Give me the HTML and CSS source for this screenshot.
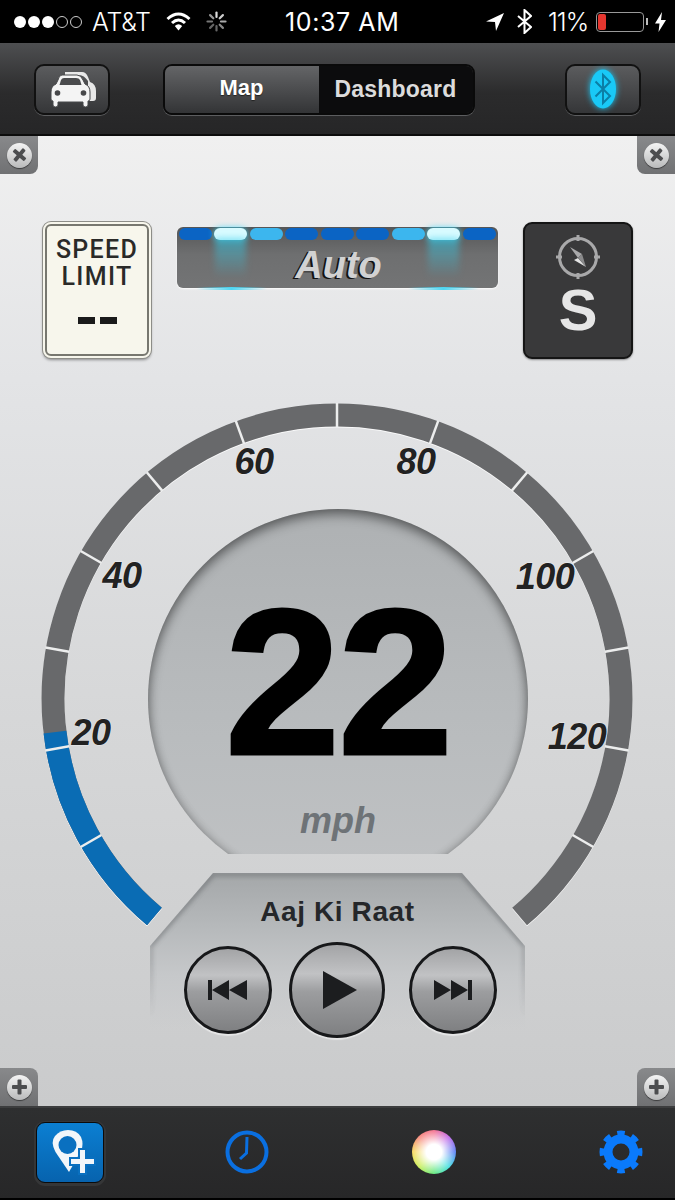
FILE: index.html

```html
<!DOCTYPE html>
<html lang="en">
<head>
    <meta charset="UTF-8">
    <meta name="viewport" content="width=device-width, initial-scale=1.0">
    <title>Dashboard</title>
    <link rel="stylesheet" href="styles.css">
</head>

<body>
    <!-- Status bar -->
    <div class="status">
        <div class="signal">
            <span class="dot"></span><span class="dot"></span><span class="dot"></span>
            <span class="dot dot-off"></span><span class="dot dot-off"></span>
        </div>
        <span class="carrier">AT&amp;T</span>
        <svg class="wifi" width="25" height="20" viewBox="0 0 25 20">
            <path d="M1.5 7 Q12.5 -3 23.5 7" fill="none" stroke="#fff" stroke-width="3"/>
            <path d="M6 11 Q12.5 5 19 11" fill="none" stroke="#fff" stroke-width="3"/>
            <path d="M8.8 14 Q12.5 10.5 16.2 14 L12.5 18.5 Z" fill="#fff"/>
        </svg>
        <svg class="spinner" width="21" height="21" viewBox="0 0 21 21" stroke-width="2.2" stroke-linecap="round">
            <path d="M10.5 1.5V6" stroke="#ddd"/>
            <path d="M16.9 4.1L13.7 7.3" stroke="#ccc"/>
            <path d="M19.5 10.5H15" stroke="#aaa"/>
            <path d="M16.9 16.9L13.7 13.7" stroke="#888"/>
            <path d="M10.5 19.5V15" stroke="#666"/>
            <path d="M4.1 16.9L7.3 13.7" stroke="#666"/>
            <path d="M1.5 10.5H6" stroke="#777"/>
            <path d="M4.1 4.1L7.3 7.3" stroke="#999"/>
        </svg>
        <span class="time">10:37 AM</span>
        <svg class="arrow" width="18" height="18" viewBox="0 0 18 18"><path d="M18 0L0 8.5L9 9L10 18Z" fill="#fff"/></svg>
        <svg class="bt" width="15" height="25" viewBox="0 0 15 25"><path d="M1 7L14 18L7.5 24V1L14 7L1 18" fill="none" stroke="#fff" stroke-width="2"/></svg>
        <span class="percent">11%</span>
        <div class="battery"><span class="battery-level"></span></div>
        <span class="battery-tip"></span>
        <svg class="bolt" width="11" height="20" viewBox="0 0 11 20"><path d="M7 0L0 11.5H4.5L3.5 20L11 8H6Z" fill="#fff"/></svg>
    </div>

    <!-- Top toolbar -->
    <header class="toolbar">
        <button class="tool-btn">
            <svg width="52" height="40" viewBox="0 0 52 40">
                <path d="M19 6V3H36Q40 3 42 8L44 13Q50 15 50 22V29Q50 32 47 32H42V12Q38 6 33 6Z" fill="#e8e8e8"/>
                <path d="M16 6H31Q35 6 37 11L39 15Q44 17 44 23V30Q44 32 42 32V36Q42 38 39.5 38T37 36V33H12V36Q12 38 9.5 38T7 36V32Q5 32 5 30V23Q5 17 10 15L12 11Q13 6 16 6Z" fill="#f4f4f4" stroke="#47484a" stroke-width="1"/>
                <path d="M13.5 16L15 11Q16 9 18 9H30Q33 9 34 11L35.5 16Z" fill="#4a4b4d"/>
                <circle cx="11.5" cy="24" r="2.8" fill="#47484a"/>
                <circle cx="37.5" cy="24" r="2.8" fill="#47484a"/>
            </svg>
        </button>
        <div class="segmented">
            <span class="seg seg-on">Map</span>
            <span class="seg seg-off">Dashboard</span>
        </div>
        <button class="tool-btn">
            <svg class="bt-glow" width="40" height="48" viewBox="0 0 40 48">
                <ellipse cx="20" cy="24" rx="13" ry="19.5" fill="#19c9f7"/>
                <path d="M12.5 16.5L27 31L20 38V10L27 17L12.5 31.5" fill="none" stroke="#0b7ea6" stroke-width="2"/>
            </svg>
        </button>
    </header>

    <!-- Main panel -->
    <main class="panel">
        <div class="notch notch-tl"><span class="screw screw-x"></span></div>
        <div class="notch notch-tr"><span class="screw screw-x"></span></div>
        <div class="notch notch-bl"><span class="screw screw-plus"></span></div>
        <div class="notch notch-br"><span class="screw screw-plus"></span></div>

        <div class="top-row">
            <div class="sign">
                <span class="sign-text">SPEED</span>
                <span class="sign-text">LIMIT</span>
                <div class="sign-dashes"><span></span><span></span></div>
            </div>

            <div class="lightbar">
                <div class="leds">
                    <span class="led"></span>
                    <span class="led led-white"></span>
                    <span class="led led-light"></span>
                    <span class="led"></span>
                    <span class="led"></span>
                    <span class="led"></span>
                    <span class="led led-light"></span>
                    <span class="led led-white"></span>
                    <span class="led"></span>
                </div>
                <span class="auto">Auto</span>
            </div>

            <div class="compass">
                <svg width="46" height="46" viewBox="0 0 46 46">
                    <circle cx="23" cy="23" r="18.5" fill="none" stroke="#a9a9aa" stroke-width="3"/>
                    <path d="M23 1V7M23 39V45M1 23H7M39 23H45" stroke="#a9a9aa" stroke-width="3"/>
                    <path d="M15 13L27 20L23 24Z" fill="#a9a9aa"/>
                    <path d="M31 33L19 26L23 24Z" fill="#e4e4e4"/>
                    <path d="M27 20L31 33L23 24Z" fill="#8a8a8b"/>
                </svg>
                <span class="compass-dir">S</span>
            </div>
        </div>

        <div class="gauge">
            <svg class="gauge-svg" width="675" height="540" viewBox="0 400 675 540">
                <g class="gauge-arcs">
                    <circle class="arc arc-grey" cx="337" cy="700" r="284" pathLength="360" transform="rotate(130 337 700)"/>
                    <circle class="arc arc-blue" cx="337" cy="700" r="284" pathLength="360" transform="rotate(130 337 700)"/>
                </g>
                <line class="tick" x1="337" y1="404" x2="337" y2="428" transform="rotate(-120 337 700)"/>
                <line class="tick" x1="337" y1="404" x2="337" y2="428" transform="rotate(-100 337 700)"/>
                <line class="tick" x1="337" y1="404" x2="337" y2="428" transform="rotate(-80 337 700)"/>
                <line class="tick" x1="337" y1="404" x2="337" y2="428" transform="rotate(-60 337 700)"/>
                <line class="tick" x1="337" y1="404" x2="337" y2="428" transform="rotate(-40 337 700)"/>
                <line class="tick" x1="337" y1="404" x2="337" y2="428" transform="rotate(-20 337 700)"/>
                <line class="tick" x1="337" y1="404" x2="337" y2="428"/>
                <line class="tick" x1="337" y1="404" x2="337" y2="428" transform="rotate(20 337 700)"/>
                <line class="tick" x1="337" y1="404" x2="337" y2="428" transform="rotate(40 337 700)"/>
                <line class="tick" x1="337" y1="404" x2="337" y2="428" transform="rotate(60 337 700)"/>
                <line class="tick" x1="337" y1="404" x2="337" y2="428" transform="rotate(80 337 700)"/>
                <line class="tick" x1="337" y1="404" x2="337" y2="428" transform="rotate(100 337 700)"/>
                <line class="tick" x1="337" y1="404" x2="337" y2="428" transform="rotate(120 337 700)"/>
                <text class="gauge-label" x="91" y="746">20</text>
                <text class="gauge-label" x="122" y="589">40</text>
                <text class="gauge-label" x="254" y="475">60</text>
                <text class="gauge-label" x="416" y="475">80</text>
                <text class="gauge-label" x="545" y="590">100</text>
                <text class="gauge-label" x="577" y="750">120</text>
            </svg>

            <div class="dial-clip">
                <div class="dial">
                    <span class="speed">22</span>
                    <span class="unit">mph</span>
                </div>
            </div>

            <div class="music">
                <svg class="music-edge" width="375" height="170" viewBox="0 0 375 170">
                    <path d="M0 170V73L63 1H312L375 73V170" fill="none" stroke="#55585b" stroke-width="3"/>
                </svg>
                <span class="track">Aaj Ki Raat</span>
                <div class="controls">
                    <button class="ctl">
                        <svg width="40" height="22" viewBox="0 0 40 22"><path d="M0 1H4V21H0ZM4 11L21 1V21ZM21 11L39 1V21Z" fill="#1c1d1f"/></svg>
                    </button>
                    <button class="ctl ctl-play">
                        <svg width="34" height="38" viewBox="0 0 34 38"><path d="M0 0L34 19L0 38Z" fill="#1c1d1f"/></svg>
                    </button>
                    <button class="ctl ctl-next">
                        <svg width="40" height="22" viewBox="0 0 40 22"><path d="M1 1L18 11V1L35 11V1H39V21H35V11L18 21V11L1 21Z" fill="#1c1d1f"/></svg>
                    </button>
                </div>
            </div>
        </div>
    </main>

    <!-- Bottom tab bar -->
    <nav class="tabbar">
        <div class="tab-add">
            <svg width="68" height="61" viewBox="0 0 68 61">
                <path d="M33 50L19.5 30Q14 20 19 14Q24 8 32 8Q41 8 45 15Q48 22 45 29Z" fill="#f2f6fa"/>
                <circle cx="31.5" cy="23" r="9" fill="#0a70c0"/>
                <path d="M43 27H50V36H59V43H50V52H43V43H34V36H43Z" fill="#f2f6fa" stroke="#0a70c0" stroke-width="2"/>
            </svg>
        </div>
        <svg class="tab-clock" width="44" height="44" viewBox="0 0 44 44">
            <circle cx="22" cy="22" r="19.5" fill="none" stroke="#0a6fe0" stroke-width="4"/>
            <path d="M22 7L21.5 23L15 29" fill="none" stroke="#0a6fe0" stroke-width="3"/>
        </svg>
        <div class="tab-color"></div>
        <svg class="tab-gear" width="44" height="44" viewBox="0 0 44 44">
            <circle cx="22" cy="22" r="13" fill="none" stroke="#0a7afc" stroke-width="9"/>
            <circle cx="22" cy="22" r="18.5" fill="none" stroke="#0a7afc" stroke-width="6" pathLength="8" stroke-dasharray="0.5 0.5" transform="rotate(-101.25 22 22)"/>
        </svg>
    </nav>
</body>
</html>
```

FILE: styles.css

```css
* {
    box-sizing: border-box;
}

body {
    margin: 0;
    width: 675px;
    height: 1200px;
    overflow: hidden;
    display: flex;
    flex-direction: column;
    font-family: 'Liberation Sans', Arial, sans-serif;
    background-color: #000;
}

button {
    padding: 0;
    cursor: pointer;
}

/* Status bar */
.status {
    height: 43px;
    flex: none;
    display: flex;
    align-items: center;
    padding-left: 14px;
    background-color: #000;
    color: #fff;
    font-family: 'Inter', 'Liberation Sans', sans-serif;
    font-weight: 300;
}

.signal {
    display: flex;
    gap: 2px;
    width: 78px;
}

.dot {
    width: 12px;
    height: 12px;
    border-radius: 50%;
    background-color: #fff;
}

.dot-off {
    background-color: transparent;
    border: 1px solid #ccc;
}

.carrier {
    font-size: 25px;
    width: 74px;
    letter-spacing: -0.3px;
}

.wifi {
    margin-right: 15px;
}

.spinner {
    margin-right: 58px;
}

.time {
    font-size: 25px;
    font-weight: 400;
    width: 201px;
    letter-spacing: 0.6px;
}

.bt {
    margin-left: 13px;
}

.percent {
    font-size: 25px;
    margin-left: 16px;
    width: 48px;
    letter-spacing: -1px;
}

.battery {
    width: 48px;
    height: 20px;
    border: 1px solid #999;
    border-radius: 4px;
    padding: 1px;
}

.battery-level {
    display: block;
    width: 8px;
    height: 100%;
    border-radius: 2px;
    background-color: #e5362f;
}

.battery-tip {
    width: 2px;
    height: 7px;
    margin-left: 2px;
    background-color: #bbb;
}

.bolt {
    margin-left: 7px;
}

/* Toolbar */
.toolbar {
    height: 93px;
    flex: none;
    display: flex;
    align-items: center;
    justify-content: space-between;
    padding: 1px 34px 0 34px;
    background: linear-gradient(#4e4f51, #2b2b2c 55%, #262627);
    border-bottom: 2px solid #0c0c0c;
}

.tool-btn {
    width: 76px;
    height: 51px;
    display: flex;
    align-items: center;
    justify-content: center;
    border: 2px solid #111;
    border-radius: 10px;
    background: linear-gradient(#5b5c5e, #353638);
    box-shadow: 0 1px 0 #5c5d5f;
}

.bt-glow {
    filter: drop-shadow(0 0 3px #19c9f7);
}

.segmented {
    width: 312px;
    height: 51px;
    margin-right: 38px;
    display: flex;
    border: 2px solid #0a0a0a;
    border-radius: 9px;
    overflow: hidden;
    box-shadow: 0 1px 0 #5c5d5f;
    font-weight: bold;
}

.seg {
    display: flex;
    align-items: center;
    justify-content: center;
}

.seg-on {
    width: 154px;
    padding-bottom: 3px;
    background: linear-gradient(#646567, #333436);
    color: #fff;
    font-size: 22px;
    text-shadow: 0 1px 1px #222;
}

.seg-off {
    flex: 1;
    background-color: #0c0c0d;
    color: #dcdcdc;
    font-size: 23px;
    letter-spacing: 0.2px;
}

/* Main panel */
.panel {
    position: relative;
    height: 970px;
    flex: none;
    padding-top: 86px;
    background: linear-gradient(#f0f0f0, #e3e4e6 25%, #d6d7d8 60%, #cacbcc);
}

.notch {
    position: absolute;
    width: 38px;
    height: 38px;
    display: flex;
    align-items: center;
    justify-content: center;
    background: linear-gradient(#88898b, #707173);
}

.notch-tl {
    left: 0;
    top: 0;
    border-bottom-right-radius: 8px;
}

.notch-tr {
    right: 0;
    top: 0;
    border-bottom-left-radius: 8px;
}

.notch-bl {
    left: 0;
    bottom: 0;
    border-top-right-radius: 8px;
}

.notch-br {
    right: 0;
    bottom: 0;
    border-top-left-radius: 8px;
}

.screw {
    position: relative;
    width: 25px;
    height: 25px;
    border-radius: 50%;
    background: linear-gradient(#f4f4f4, #b9babb);
    box-shadow: 0 1px 1px rgba(0, 0, 0, 0.5);
}

.screw::before,
.screw::after {
    content: "";
    position: absolute;
    left: 5px;
    top: 10.5px;
    width: 15px;
    height: 4px;
    border-radius: 1px;
    background-color: #4c4d4f;
}

.screw-x::before {
    transform: rotate(40deg);
}

.screw-x::after {
    transform: rotate(-50deg);
}

.screw-plus::after {
    transform: rotate(90deg);
}

.top-row {
    display: flex;
    justify-content: space-between;
    align-items: flex-start;
    padding: 0 42px 0 43px;
}

.sign {
    width: 108px;
    height: 136px;
    display: flex;
    flex-direction: column;
    align-items: center;
    padding-top: 12px;
    background-color: #f7f6ec;
    border: 2px solid #f7f6ec;
    border-radius: 8px;
    outline: 2px solid #77776f;
    outline-offset: -4px;
    box-shadow: 0 0 0 1px #8d8d88, 0 2px 3px rgba(0, 0, 0, 0.4);
    color: #2a2a28;
}

.sign-text {
    font-family: 'Roboto', 'Liberation Sans', sans-serif;
    font-size: 25px;
    font-weight: 500;
    line-height: 27px;
    letter-spacing: 1.3px;
}

.sign-dashes {
    display: flex;
    gap: 5px;
    margin-top: 27px;
}

.sign-dashes span {
    width: 17px;
    height: 7px;
    background-color: #1a1a1a;
}

.lightbar {
    position: relative;
    width: 321px;
    height: 61px;
    margin-top: 5px;
    border-radius: 6px;
    background: linear-gradient(#555657, #6e6f70 45%, #737475);
    box-shadow: 0 1px 2px rgba(255, 255, 255, 0.9);
    display: flex;
    flex-direction: column;
    align-items: center;
}

/* cyan line under the bar, below the lit leds */
.lightbar::after {
    content: "";
    position: absolute;
    left: 0;
    right: 0;
    bottom: -2px;
    height: 3px;
    background: linear-gradient(90deg, transparent 6%, #4fd6f2 17%, transparent 28%, transparent 72%, #4fd6f2 83%, transparent 94%);
}

.leds {
    display: flex;
    gap: 2.5px;
    padding-top: 1px;
}

.led {
    position: relative;
    width: 33px;
    height: 12px;
    border-radius: 7px;
    background-color: #0b64c4;
}

.led-light {
    background-color: #3cb6ee;
}

.led-white {
    background-color: #d9fbff;
    box-shadow: 0 0 6px #3fd8f7;
}

/* glow coming down from the lit leds */
.led-white::after {
    content: "";
    position: absolute;
    left: 1px;
    top: 10px;
    width: 31px;
    height: 40px;
    background: linear-gradient(rgba(50, 205, 235, 0.55), rgba(50, 205, 235, 0));
    filter: blur(3px);
}

.auto {
    position: relative;
    font-size: 38px;
    line-height: 40px;
    margin: 5px 0 0 3px;
    font-weight: bold;
    font-style: italic;
    color: #d2d2d2;
    text-shadow: -2px 1px 0 #111;
}

.compass {
    width: 110px;
    height: 137px;
    display: flex;
    flex-direction: column;
    align-items: center;
    padding-top: 10px;
    background-color: #39393a;
    border: 2px solid #151515;
    border-radius: 9px;
    box-shadow: 0 1px 2px rgba(0, 0, 0, 0.4);
}

.compass-dir {
    font-size: 58px;
    line-height: 56px;
    margin-top: 2px;
    font-weight: bold;
    color: #e6e6e6;
}

/* Gauge */
.gauge {
    position: relative;
    height: 540px;
    margin-top: 40px;
}

.gauge-svg {
    display: block;
}

.gauge-arcs {
    filter: drop-shadow(0 1px 0 rgba(255, 255, 255, 0.8));
}

.arc {
    fill: none;
    stroke-width: 23;
}

.arc-grey {
    stroke: #68696b;
    stroke-dasharray: 280 80;
}

.arc-blue {
    stroke: #0a6cb4;
    stroke-dasharray: 43.3 316.7;
}

.tick {
    stroke: #eceded;
    stroke-width: 2.5;
}

.gauge-label {
    font-size: 36px;
    font-weight: bold;
    font-style: italic;
    text-anchor: middle;
    fill: #222;
    letter-spacing: -0.5px;
    paint-order: stroke;
    stroke: rgba(255, 255, 255, 0.5);
    stroke-width: 1px;
}

.dial-clip {
    position: absolute;
    left: 148px;
    top: 110px;
    width: 380px;
    height: 345px;
    overflow: hidden;
}

.dial {
    width: 380px;
    height: 380px;
    display: flex;
    flex-direction: column;
    align-items: center;
    border-radius: 50%;
    background: linear-gradient(#aeb1b3, #b9bcbe 60%, #c0c2c4);
    box-shadow: inset 0 6px 12px rgba(0, 0, 0, 0.4), inset 0 0 10px rgba(0, 0, 0, 0.22);
}

.speed {
    margin-top: 88px;
    font-size: 207px;
    line-height: 172px;
    font-weight: bold;
    color: #000;
    letter-spacing: -2px;
    -webkit-text-stroke: 3px #000;
}

.unit {
    margin-top: 32px;
    font-size: 36px;
    line-height: 40px;
    font-weight: bold;
    font-style: italic;
    color: #6e7377;
}

.music {
    position: absolute;
    left: 150px;
    top: 474px;
    width: 375px;
    height: 170px;
    display: flex;
    flex-direction: column;
    align-items: center;
    padding-top: 20px;
    clip-path: polygon(0 73px, 63px 0, 312px 0, 375px 73px, 375px 100%, 0 100%);
    background: linear-gradient(#a4a7a9, #b5b8ba 30%, #c6c8ca 60%, rgba(207, 208, 209, 0) 92%);
}

.music-edge {
    position: absolute;
    left: 0;
    top: 0;
    filter: blur(2.5px);
    opacity: 0.75;
    -webkit-mask-image: linear-gradient(#000 50%, transparent 85%);
    mask-image: linear-gradient(#000 50%, transparent 85%);
}

.track {
    position: relative;
    font-size: 28px;
    line-height: 34px;
    margin-top: 2px;
    font-weight: bold;
    color: #25272a;
    letter-spacing: 0.6px;
}

.controls {
    position: relative;
    display: flex;
    align-items: center;
    gap: 17px;
    margin: 13px 0 0 6px;
}

.ctl {
    width: 88px;
    height: 88px;
    display: flex;
    align-items: center;
    justify-content: center;
    border: 3px solid #17181a;
    border-radius: 50%;
    background: linear-gradient(#a3a4a6, #c1c2c4 32%, #9c9d9f 52%, #7f8082);
    box-shadow: 0 2px 1px rgba(255, 255, 255, 0.5);
}

.ctl-play {
    width: 96px;
    height: 96px;
    padding-left: 6px;
}

.ctl-next {
    margin-left: 7px;
}

/* Bottom tabs */
.tabbar {
    height: 94px;
    flex: none;
    display: flex;
    align-items: center;
    gap: 143px;
    padding: 0 0 2px 36px;
    background: linear-gradient(#2e2f30, #272728);
    border-top: 2px solid #3c3d3e;
    border-bottom: 2px solid #000;
}

.tab-add {
    width: 68px;
    height: 61px;
    margin-top: 1px;
    border: 1px solid #0b0b0b;
    border-radius: 9px;
    background: linear-gradient(#0b7fd2, #0763ae);
    box-shadow: 0 1px 0 2px #353637;
}

.tab-add svg {
    display: block;
    margin: -1px;
}

.tab-clock {
    margin-left: -22px;
}

.tab-color {
    width: 44px;
    height: 44px;
    border-radius: 50%;
    background:
        radial-gradient(circle, #fff 25%, rgba(255, 255, 255, 0) 72%),
        conic-gradient(#f4718f, #c069e8, #5a82f5, #44dfe0, #62e77c, #c9ee57, #f7d95c, #f6877a, #f4718f);
}
```
